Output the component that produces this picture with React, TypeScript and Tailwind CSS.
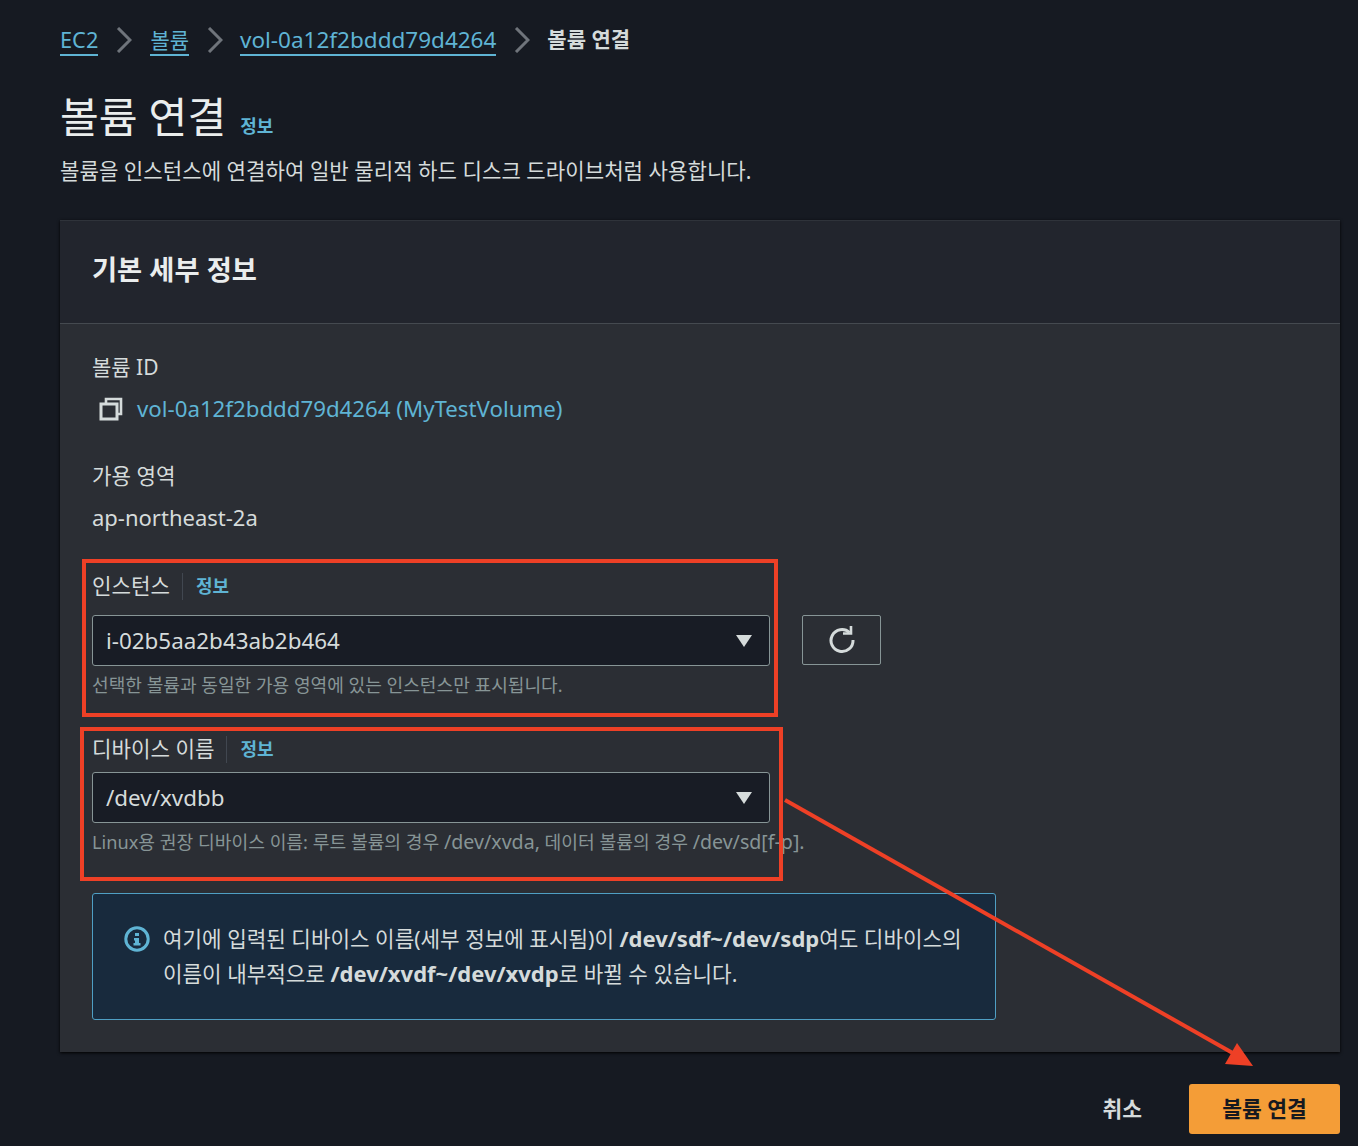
const font = { fontFamily: '"Noto Sans", "Noto Sans CJK KR", sans-serif' };

function Chevron() {
  return (
    <svg className="mx-[18px] shrink-0" width="16" height="26" viewBox="0 0 16 26" fill="none" stroke="#6f747b" strokeWidth="3">
      <path d="M2 1l12 12L2 25" />
    </svg>
  );
}

function Label({ text }: { text: string }) {
  return (
    <div className="flex h-[28px] items-center">
      <span className="text-[21.2px] text-[#d5dbdb]">{text}</span>
      <span className="ml-[12px] h-[27px] border-l border-[#414750]" />
      <a className="ml-[13px] text-[18px] font-bold text-[#5fb4d4]">정보</a>
    </div>
  );
}

function Select({ value }: { value: string }) {
  return (
    <div className="flex h-[51px] items-center justify-between rounded-[3px] border border-[#879596] bg-[#181c25] pl-[13px] pr-[16px] text-[22.4px] text-[#d5dbdb]">
      <span>{value}</span>
      <svg width="18" height="14" viewBox="0 0 18 14">
        <path d="M1 1h16L9 13z" fill="#d5dbdb" />
      </svg>
    </div>
  );
}

export default function App() {
  return (
    <div style={font} className="relative h-[1146px] w-[1358px] overflow-hidden bg-[#161a22] pl-[60px] pr-[18px] pt-[22px]">
      {/* breadcrumb */}
      <nav className="flex h-[36px] items-center">
        <a className="mt-[2px] border-b-2 border-[#5fb4d4] text-[21.8px] leading-[28px] text-[#5fb4d4]">EC2</a>
        <Chevron />
        <a className="mt-[2px] border-b-2 border-[#5fb4d4] text-[21px] leading-[28px] text-[#5fb4d4]">볼륨</a>
        <Chevron />
        <a className="mt-[2px] -ml-[1px] border-b-2 border-[#5fb4d4] text-[22.5px] leading-[28px] text-[#5fb4d4]">vol-0a12f2bddd79d4264</a>
        <Chevron />
        <span className="-ml-[1px] text-[21px] font-bold text-[#d5dbdb]">볼륨 연결</span>
      </nav>

      {/* title */}
      <div className="mt-[29px] flex items-baseline">
        <h1 className="text-[42.2px] font-normal leading-[60px] text-[#eaeded]">볼륨 연결</h1>
        <a className="ml-[14px] text-[18px] font-bold text-[#5fb4d4]">정보</a>
      </div>
      <p className="mt-[9px] text-[21.15px] leading-[30px] text-[#d5dbdb]">
        볼륨을 인스턴스에 연결하여 일반 물리적 하드 디스크 드라이브처럼 사용합니다.
      </p>

      {/* card */}
      <section className="mt-[34px] h-[832px] border-t border-[#2f333a] bg-[#2b2e34] shadow-[0_1px_3px_#000]">
        <header className="flex h-[103px] items-center border-b border-[#454a50] bg-[#22252d] pb-[4px] pl-[32px]">
          <h2 className="text-[27.3px] font-bold text-[#eaeded]">기본 세부 정보</h2>
        </header>

        <div className="pl-[32px] pt-[28px]">
          <div className="text-[21px] leading-[30px] text-[#d5dbdb]">볼륨 ID</div>
          <div className="mt-[12px] flex h-[30px] items-center">
            <svg className="ml-[7px]" width="24" height="24" viewBox="0 0 24 24" fill="none" stroke="#d5dbdb" strokeWidth="3">
              <path d="M7 6V2h15v15h-4" strokeWidth="2.6" />
              <rect x="2" y="7" width="16" height="15" />
            </svg>
            <a className="ml-[14px] text-[22.25px] text-[#5fb4d4]">vol-0a12f2bddd79d4264 (MyTestVolume)</a>
          </div>

          <div className="mt-[37px] text-[21.2px] leading-[30px] text-[#d5dbdb]">가용 영역</div>
          <div className="mt-[11px] text-[22px] leading-[30px] text-[#d5dbdb]">ap-northeast-2a</div>

          <div className="mt-[40px] w-[678px]">
            <Label text="인스턴스" />
            <div className="mt-[15px] flex w-[789px] items-start">
              <div className="w-[678px]">
                <Select value="i-02b5aa2b43ab2b464" />
              </div>
              <button className="ml-[32px] flex h-[50px] w-[79px] items-center justify-center rounded-[2px] border border-[#879596]">
                <svg width="28" height="28" viewBox="0 0 28 28" fill="none" stroke="#d5dbdb" strokeWidth="3">
                  <path d="M21.5 6.5A11 11 0 1 0 25 14" />
                  <path d="M15 7.5h8V0" strokeWidth="2.6" />
                </svg>
              </button>
            </div>
            <p className="mt-[6px] whitespace-nowrap text-[18.1px] leading-[26px] text-[#879596]">
              선택한 볼륨과 동일한 가용 영역에 있는 인스턴스만 표시됩니다.
            </p>
          </div>

          <div className="mt-[37px] w-[678px]">
            <Label text="디바이스 이름" />
            <div className="mt-[9px]">
              <Select value="/dev/xvdbb" />
            </div>
            <p className="mt-[6px] whitespace-nowrap text-[18.2px] leading-[26px] text-[#879596]">
              Linux용 권장 디바이스 이름: 루트 볼륨의 경우 <span className="text-[19.6px]">/dev/xvda,</span> 데이터 볼륨의 경우{" "}
              <span className="text-[19.6px]">/dev/sd[f-p].</span>
            </p>
          </div>

          {/* info alert */}
          <div className="mt-[38px] flex h-[127px] w-[904px] rounded-[3px] border border-[#4f9fc4] bg-[#182a3d] pl-[31px] pt-[27px]">
            <svg className="mt-[5px] shrink-0" width="26" height="26" viewBox="0 0 26 26" fill="none">
              <circle cx="13" cy="13" r="11.2" stroke="#5fb4d4" strokeWidth="3" />
              <path d="M11 7h4v3h-4zM10 12h5v5h1.5v2.5h-7V17H11v-2.5h-1z" fill="#5fb4d4" />
            </svg>
            <p className="ml-[13px] whitespace-nowrap text-[21.25px] leading-[35px] text-[#d5dbdb]">
              여기에 입력된 디바이스 이름(세부 정보에 표시됨)이 <b className="text-[22px]">/dev/sdf~/dev/sdp</b>여도 디바이스의
              <br />
              이름이 내부적으로 <b className="text-[22px]">/dev/xvdf~/dev/xvdp</b>로 바뀔 수 있습니다.
            </p>
          </div>
        </div>
      </section>

      {/* footer */}
      <div className="mt-[32px] flex items-center justify-end">
        <button className="mr-[47px] text-[21.5px] font-bold text-[#d5dbdb]">취소</button>
        <button className="h-[50px] w-[151px] rounded-[3px] bg-[#f49d37] text-[21.5px] font-bold text-[#16191f]">볼륨 연결</button>
      </div>

      {/* red annotations over the screenshot */}
      <div className="absolute left-[82px] top-[559px] h-[158px] w-[696px] border-[4px] border-[#ee4026]" />
      <div className="absolute left-[80px] top-[727px] h-[154px] w-[703px] border-[4px] border-[#ee4026]" />
      <svg className="absolute left-0 top-0" width="1358" height="1146" viewBox="0 0 1358 1146" fill="none">
        <path d="M785 800L1238 1056" stroke="#ee4026" strokeWidth="4" />
        <path d="M1237 1043L1253 1066L1225 1064Z" fill="#ee4026" />
      </svg>
    </div>
  );
}
